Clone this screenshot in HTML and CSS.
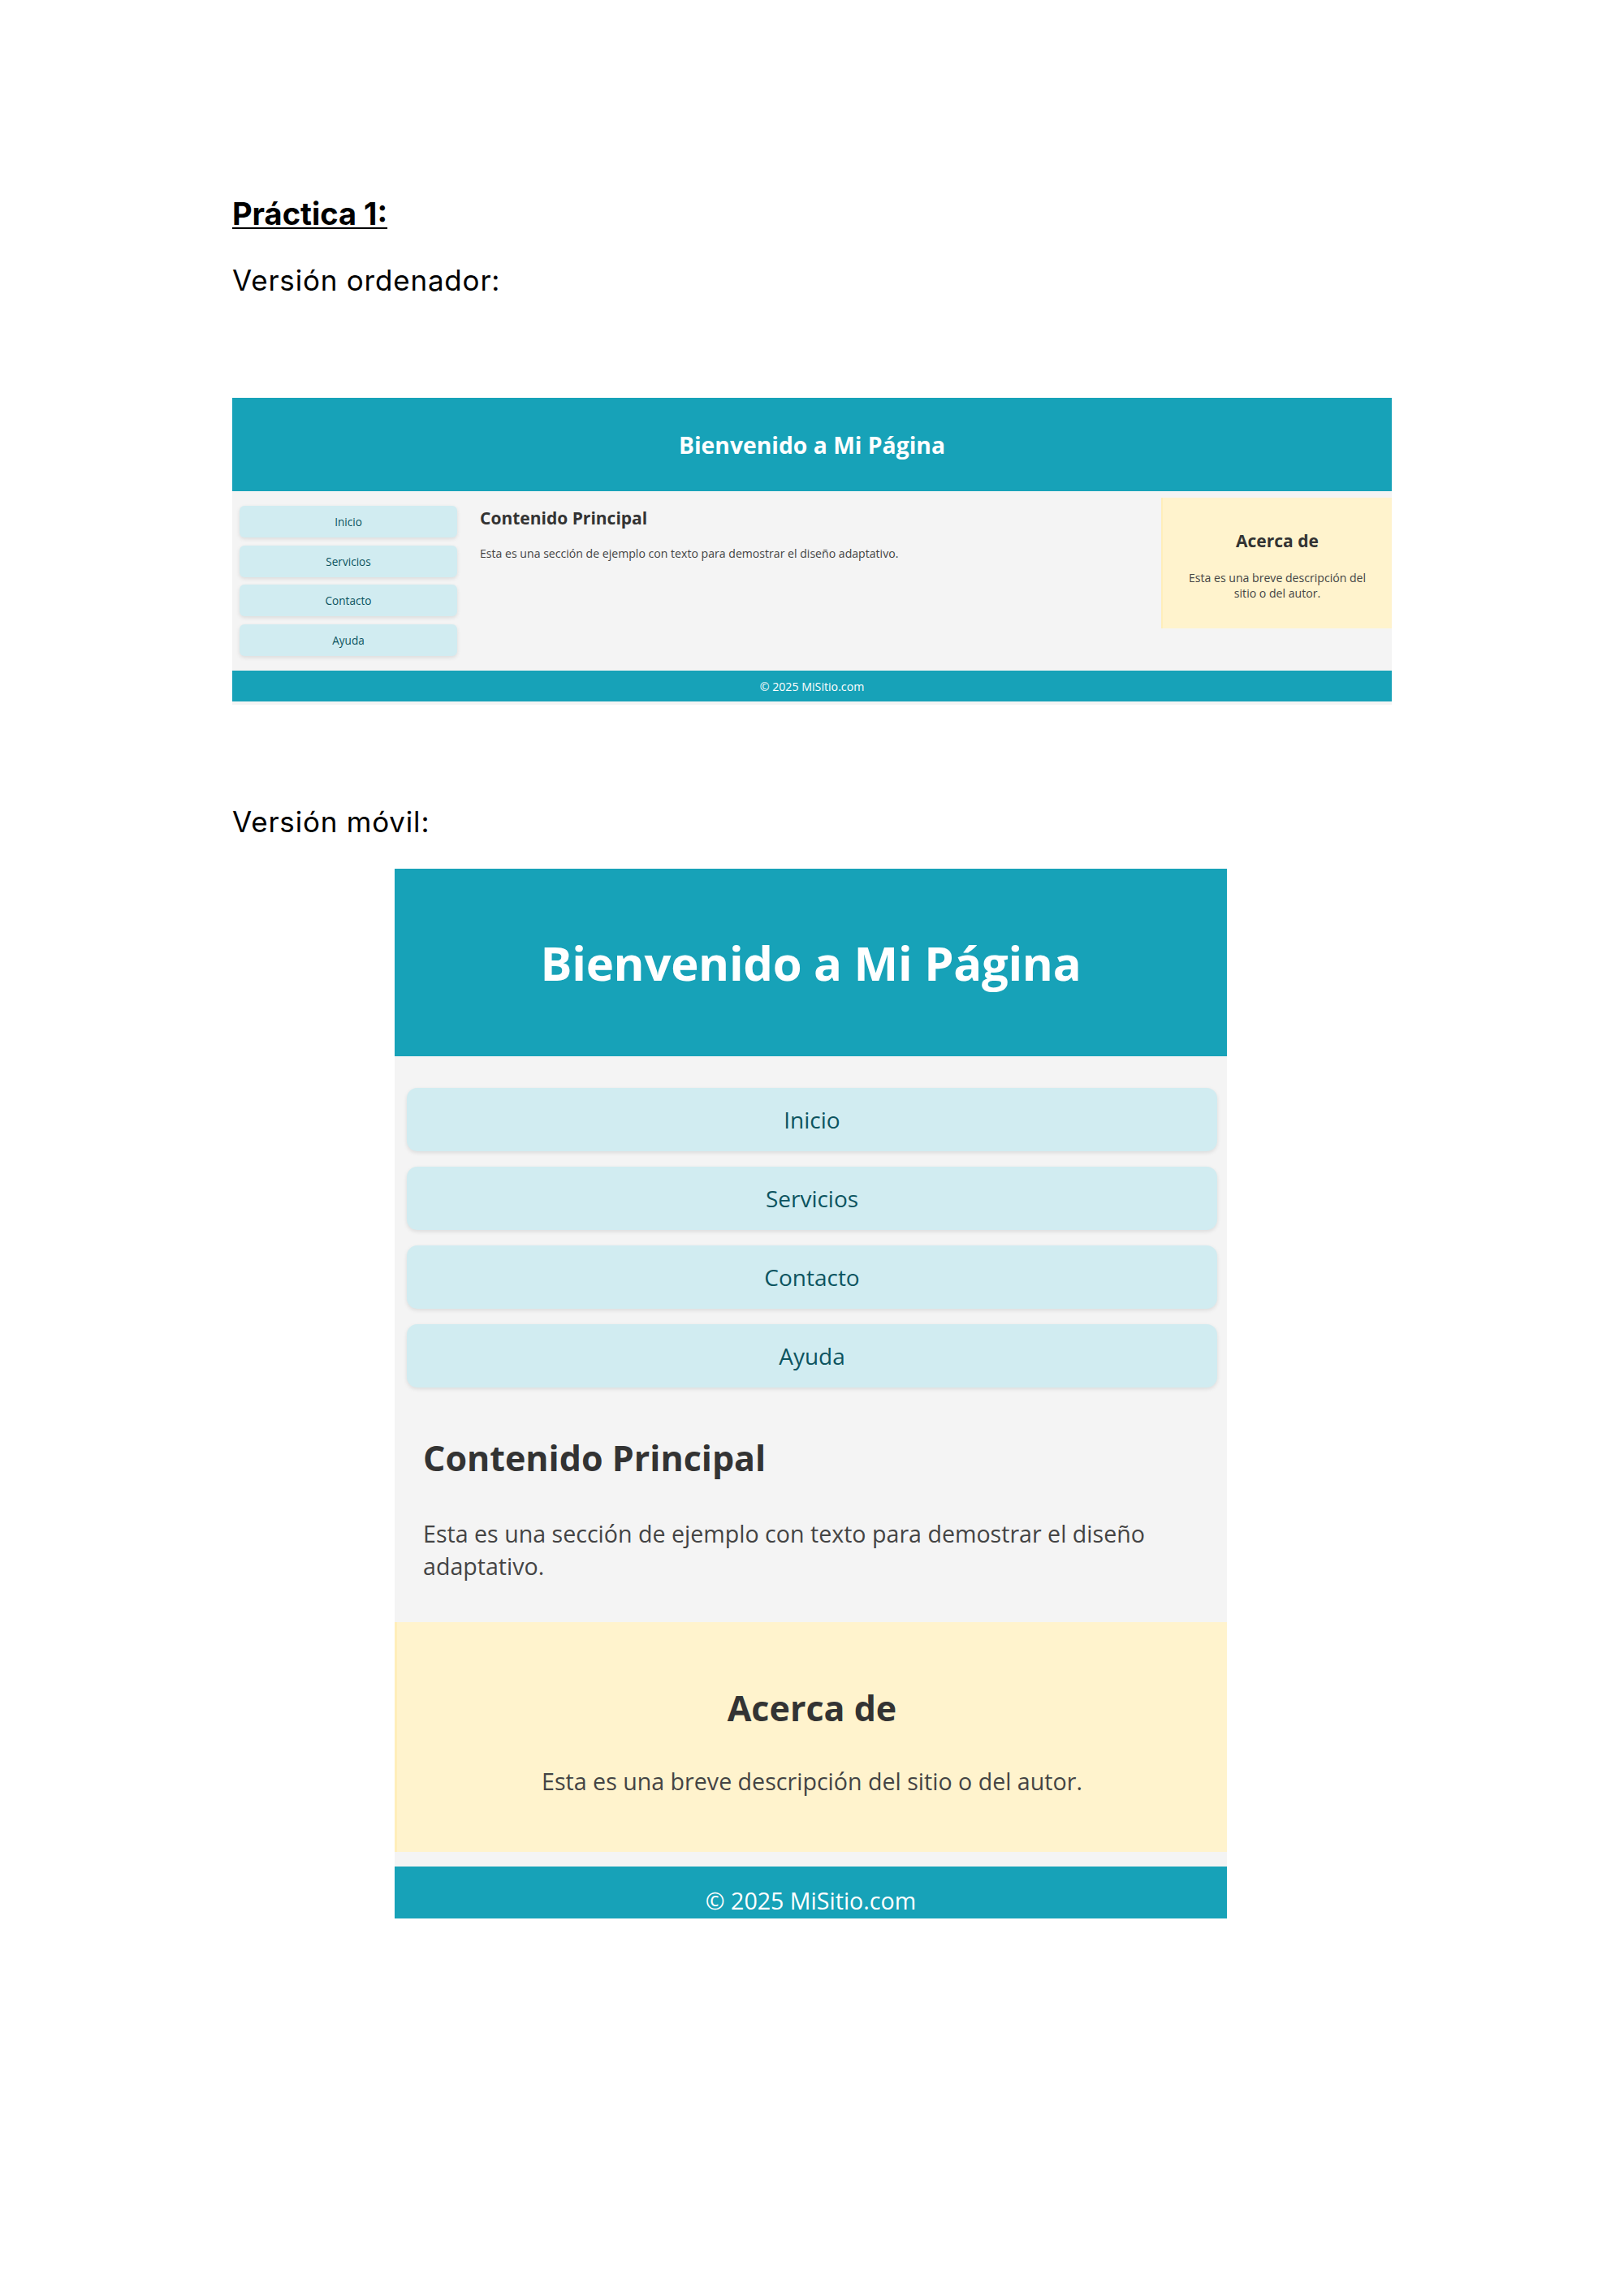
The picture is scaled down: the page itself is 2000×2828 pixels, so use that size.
FILE: index.html
```html
<!DOCTYPE html>
<html lang="es">
<head>
<meta charset="utf-8">
<title>Práctica 1</title>
<link rel="stylesheet" href="styles.css">
</head>
<body>
<div class="doc">
  <h1 class="doc-title">Práctica 1:</h1>
  <p class="doc-label">Versión ordenador:</p>

  <div class="shot desktop">
    <header class="site-header"><h1>Bienvenido a Mi Página</h1></header>
    <div class="site-main">
      <nav class="site-nav">
        <a>Inicio</a>
        <a>Servicios</a>
        <a>Contacto</a>
        <a>Ayuda</a>
      </nav>
      <section class="content">
        <h2>Contenido Principal</h2>
        <p>Esta es una sección de ejemplo con texto para demostrar el diseño adaptativo.</p>
      </section>
      <aside class="about">
        <h3>Acerca de</h3>
        <p>Esta es una breve descripción del sitio o del autor.</p>
      </aside>
    </div>
    <footer class="site-footer">© 2025 MiSitio.com</footer>
  </div>

  <p class="doc-label mobile-label">Versión móvil:</p>

  <div class="shot mobile">
    <header class="site-header"><h1>Bienvenido a Mi Página</h1></header>
    <nav class="site-nav">
      <a>Inicio</a>
      <a>Servicios</a>
      <a>Contacto</a>
      <a>Ayuda</a>
    </nav>
    <section class="content">
      <h2>Contenido Principal</h2>
      <p>Esta es una sección de ejemplo con texto para demostrar el diseño adaptativo.</p>
    </section>
    <aside class="about">
      <h3>Acerca de</h3>
      <p>Esta es una breve descripción del sitio o del autor.</p>
    </aside>
    <footer class="site-footer">© 2025 MiSitio.com</footer>
  </div>
</div>
</body>
</html>
```

FILE: styles.css
```css
html, body {
  margin: 0;
  padding: 0;
  background: #ffffff;
}

.doc {
  padding: 240px 0 200px 286px;
  font-family: Inter, "Liberation Sans", sans-serif;
  color: #000;
}

.doc-title {
  margin: 0;
  font-size: 38px;
  line-height: 46px;
  font-weight: 700;
  text-decoration: underline;
  text-decoration-thickness: 2px;
  text-underline-offset: 3px;
}

.doc-label {
  margin: 39px 0 0;
  font-size: 35px;
  line-height: 41px;
  font-weight: 400;
  letter-spacing: 0.8px;
}

.mobile-label {
  margin-top: 124px;
}

/* ---------- embedded screenshots ---------- */
.shot {
  font-family: "Open Sans", "Noto Sans", sans-serif;
  background: #f4f4f4;
  color: #333;
}

.shot h1, .shot h2, .shot h3, .shot p {
  margin: 0;
}

.site-header {
  background: #17a2b8;
  display: flex;
  align-items: center;
  justify-content: center;
}

.site-header h1 {
  color: #ffffff;
  font-weight: 700;
}

.site-nav {
  display: flex;
  flex-direction: column;
}

.site-nav a {
  display: flex;
  align-items: center;
  justify-content: center;
  background: #d1ecf1;
  color: #0c5460;
  box-shadow: 0 2px 5px rgba(0, 0, 0, 0.1);
}

.content h2,
.about h3 {
  font-weight: 700;
  color: #333;
}

.content p,
.about p {
  color: #444;
}

.about {
  background: #fff3cd;
  text-align: center;
  box-sizing: border-box;
}

.site-footer {
  background: #17a2b8;
  color: #ffffff;
  text-align: center;
  box-sizing: border-box;
  overflow: hidden;
}

/* ---------- desktop ---------- */
.desktop {
  width: 1428px;
  margin-top: 124px;
  padding-bottom: 4px;
}

.desktop .site-header {
  height: 115px;
}

.desktop .site-header h1 {
  font-size: 28.3px;
  line-height: 34px;
}

.desktop .site-main {
  display: flex;
  align-items: flex-start;
  height: 221px;
}

.desktop .site-nav {
  width: 268px;
  gap: 9.5px;
  margin: 18px 0 0 9px;
}

.desktop .site-nav a {
  height: 39px;
  border-radius: 6px;
  font-size: 13.6px;
}

.desktop .content {
  flex: 1;
  margin: 20.75px 0 0 28px;
}

.desktop .content h2,
.desktop .about h3 {
  font-size: 21px;
  line-height: 25.2px;
}

.desktop .content p {
  margin-top: 22.5px;
  font-size: 14.1px;
  line-height: 18.5px;
}

.desktop .about {
  width: 284px;
  height: 161px;
  margin-top: 8px;
  padding: 41.25px 30px 0;
  border-left: 2px solid #ffeeba;
}

.desktop .about p {
  margin-top: 22.5px;
  font-size: 14.1px;
  line-height: 19.5px;
}

.desktop .site-footer {
  height: 38px;
  display: flex;
  align-items: center;
  justify-content: center;
  font-size: 14.2px;
}

/* ---------- mobile ---------- */
.mobile {
  width: 1025px;
  margin: 37px 0 0 200px;
}

.mobile .site-header {
  height: 231px;
}

.mobile .site-header h1 {
  font-size: 58px;
  line-height: 70px;
  letter-spacing: -0.3px;
}

.mobile .site-nav {
  gap: 19px;
  padding: 38.5px 12px 0 15px;
}

.mobile .site-nav a {
  height: 78px;
  border-radius: 13px;
  font-size: 28px;
}

.mobile .content {
  padding: 61px 35px 49px;
}

.mobile .content h2,
.mobile .about h3 {
  font-size: 43px;
  line-height: 51.6px;
}

.mobile .content p {
  margin-top: 47.5px;
  font-size: 28.6px;
  line-height: 40px;
}

.mobile .about {
  padding: 80.5px 35px 67px;
  border-left: 3px solid #ffeeba;
}

.mobile .about p {
  margin-top: 44px;
  font-size: 28.6px;
  line-height: 40px;
}

.mobile .site-footer {
  margin-top: 18px;
  height: 64px;
  padding-top: 23px;
  font-size: 28.6px;
  line-height: 38px;
}
```
